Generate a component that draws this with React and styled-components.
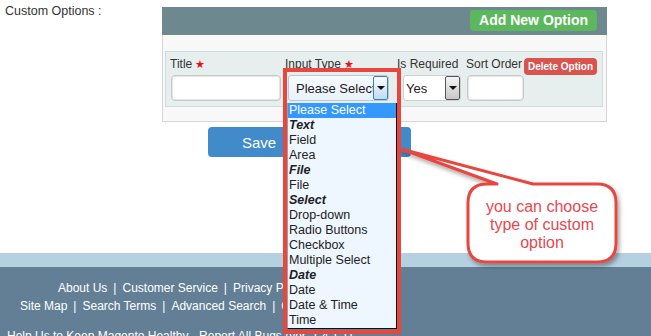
import React from "react";
import styled, { createGlobalStyle } from "styled-components";

const GlobalStyle = createGlobalStyle`
  html, body {
    margin: 0;
    padding: 0;
    background: #ffffff;
  }
  body {
    font-family: "Liberation Sans", Arial, sans-serif;
    color: #333333;
  }
`;

const Page = styled.div`
  position: relative;
  width: 651px;
  height: 336px;
  overflow: hidden;
`;

const Main = styled.div`
  height: 253px;
  padding-top: 7px;
  box-sizing: border-box;
`;

const TopRow = styled.div`
  display: flex;
  align-items: flex-start;
`;

const SideLabel = styled.div`
  width: 162px;
  padding-left: 5px;
  margin-top: -3px;
  box-sizing: border-box;
  font-size: 12.5px;
  line-height: 15px;
  color: #333;
`;

const Panel = styled.div`
  width: 445px;
  display: flex;
  flex-direction: column;
`;

const PanelHeader = styled.div`
  height: 28px;
  box-sizing: border-box;
  background: #6e8890;
  display: flex;
  align-items: flex-start;
  justify-content: flex-end;
  padding: 3px 10px 0 0;
`;

const AddButton = styled.button`
  height: 21px;
  padding: 0 9px;
  border: none;
  border-radius: 4px;
  background: #5cb85c;
  color: #ffffff;
  font-family: "Liberation Sans", Arial, sans-serif;
  font-size: 14px;
  font-weight: 700;
  line-height: 21px;
`;

const PanelBody = styled.div`
  background: #f8f8f8;
  border: 1px solid #d6d6d6;
  border-top: none;
  padding: 16px 3px 14px 2px;
`;

const OptionBox = styled.div`
  display: flex;
  align-items: flex-start;
  background: #e7eeee;
  border: 1px solid #cfdbdb;
  padding: 5px 0 5px 4px;
`;

const Column = styled.div`
  width: ${(p) => p.$w}px;
  display: flex;
  flex-direction: column;
  gap: 3px;
`;

const Label = styled.div`
  font-size: 12px;
  line-height: 15px;
  color: #333;
  white-space: nowrap;
`;

const Star = styled.span`
  color: #ee1111;
  font-size: 11px;
  margin-left: 3px;
`;

const TextInput = styled.div`
  width: ${(p) => p.$w}px;
  height: 26px;
  margin-left: 1px;
  box-sizing: border-box;
  background: #ffffff;
  border: 1px solid #c9c9c9;
  border-radius: 4px;
  box-shadow: inset 0 0 0 1px #e6e6e6;
`;

const SelectBox = styled.div`
  width: ${(p) => p.$w}px;
  height: 26px;
  margin-left: ${(p) => p.$ml}px;
  box-sizing: border-box;
  display: flex;
  align-items: center;
  background: ${(p) => (p.$blue ? "linear-gradient(#f6faff, #e9f1fa)" : "#ffffff")};
  border: 1px solid ${(p) => (p.$blue ? "#b9c9d6" : "#d0d0d0")};
  border-radius: 3px;
  font-size: 13px;
  color: #222;
  overflow: hidden;
`;

const SelectText = styled.span`
  flex: 1;
  padding-left: ${(p) => p.$pl}px;
  white-space: nowrap;
  overflow: hidden;
`;

const ArrowButton = styled.span`
  width: 15px;
  height: 24px;
  box-sizing: border-box;
  display: flex;
  align-items: center;
  justify-content: center;
  border: 1px solid ${(p) => (p.$blue ? "#3b7fb5" : "#555")};
  border-radius: 2px;
  background: ${(p) =>
    p.$blue ? "linear-gradient(#fdfeff, #bcdcf5)" : "linear-gradient(#f4f4f4, #c8c8c8)"};
  &::after {
    content: "";
    border-left: 4px solid transparent;
    border-right: 4px solid transparent;
    border-top: 4px solid #111;
  }
`;

const DeleteButton = styled.button`
  height: 17px;
  margin-top: 1px;
  padding: 0 4px;
  border: none;
  border-radius: 4px;
  background: #d9534f;
  color: #ffffff;
  font-family: "Liberation Sans", Arial, sans-serif;
  font-size: 10px;
  font-weight: 700;
  line-height: 17px;
  white-space: nowrap;
`;

const SaveButton = styled.button`
  display: block;
  width: 203px;
  height: 30px;
  margin: 5px 0 0 208px;
  padding: 0 0 0 34px;
  text-align: left;
  border: none;
  border-radius: 4px;
  background: #428bca;
  color: #ffffff;
  font-family: "Liberation Sans", Arial, sans-serif;
  font-size: 15px;
`;

const Footer = styled.div`
  border-top: 14px solid #b5d0e1;
  background: #627f95;
  height: 83px;
  padding-top: 12px;
  box-sizing: border-box;
`;

const FooterLine = styled.div`
  padding-left: ${(p) => p.$indent}px;
  margin-top: ${(p) => p.$mt || 0}px;
  font-size: 12px;
  line-height: 18px;
  color: #ffffff;
  white-space: nowrap;
`;

const Sep = styled.span`
  margin: 0 6px;
`;

const Highlight = styled.div`
  position: absolute;
  left: 283px;
  top: 68px;
  width: 118px;
  height: 266px;
  box-sizing: border-box;
  border: 4px solid #e8473f;
`;

const DropList = styled.div`
  position: absolute;
  left: 287px;
  top: 103px;
  width: 110px;
  box-sizing: border-box;
  background: #eef6ff;
  border-left: 1px solid #a0a0a0;
  border-right: 1px solid #111;
  border-bottom: 1px solid #111;
`;

const DropItem = styled.div`
  height: 15px;
  line-height: 15px;
  padding-left: 1px;
  font-size: 12.5px;
  color: ${(p) => (p.$active ? "#ffffff" : "#222")};
  background: ${(p) => (p.$active ? "#3399ff" : "transparent")};
  font-weight: ${(p) => (p.$group ? 700 : 400)};
  font-style: ${(p) => (p.$group ? "italic" : "normal")};
  white-space: nowrap;
`;

const CalloutShape = styled.svg`
  position: absolute;
  left: 0;
  top: 0;
  overflow: visible;
`;

const CalloutText = styled.div`
  position: absolute;
  left: 468px;
  top: 198px;
  width: 148px;
  text-align: center;
  font-size: 16px;
  line-height: 18px;
  color: #e8474f;
`;

const items = [
  { t: "Please Select", active: true },
  { t: "Text", group: true },
  { t: "Field" },
  { t: "Area" },
  { t: "File", group: true },
  { t: "File" },
  { t: "Select", group: true },
  { t: "Drop-down" },
  { t: "Radio Buttons" },
  { t: "Checkbox" },
  { t: "Multiple Select" },
  { t: "Date", group: true },
  { t: "Date" },
  { t: "Date & Time" },
  { t: "Time" },
];

export default function App() {
  return (
    <Page>
      <GlobalStyle />
      <Main>
        <TopRow>
          <SideLabel>Custom Options :</SideLabel>
          <Panel>
            <PanelHeader>
              <AddButton>Add New Option</AddButton>
            </PanelHeader>
            <PanelBody>
              <OptionBox>
                <Column $w={115}>
                  <Label>
                    Title<Star>★</Star>
                  </Label>
                  <TextInput $w={110} />
                </Column>
                <Column $w={112}>
                  <Label>
                    Input Type<Star>★</Star>
                  </Label>
                  <SelectBox $w={101} $ml={3} $blue>
                    <SelectText $pl={7}>Please Select</SelectText>
                    <ArrowButton $blue />
                  </SelectBox>
                </Column>
                <Column $w={69}>
                  <Label>Is Required</Label>
                  <SelectBox $w={58} $ml={6}>
                    <SelectText $pl={2}>Yes</SelectText>
                    <ArrowButton />
                  </SelectBox>
                </Column>
                <Column $w={58}>
                  <Label>Sort Order</Label>
                  <TextInput $w={57} />
                </Column>
                <DeleteButton>Delete Option</DeleteButton>
              </OptionBox>
            </PanelBody>
          </Panel>
        </TopRow>
        <SaveButton>Save</SaveButton>
      </Main>
      <Footer>
        <FooterLine $indent={58}>
          About Us<Sep>|</Sep>Customer Service<Sep>|</Sep>Privacy Policy
        </FooterLine>
        <FooterLine $indent={20}>
          Site Map<Sep>|</Sep>Search Terms<Sep>|</Sep>Advanced Search<Sep>|</Sep>Contact Us
        </FooterLine>
        <FooterLine $indent={7} $mt={12}>
          Help Us to Keep Magento Healthy - Report All Bugs (ver. 1.4.1.1)
        </FooterLine>
      </Footer>

      <Highlight />
      <DropList>
        {items.map((it, i) => (
          <DropItem key={i} $active={it.active} $group={it.group}>
            {it.t}
          </DropItem>
        ))}
      </DropList>

      <CalloutShape width="651" height="336" viewBox="0 0 651 336">
        <defs>
          <filter id="cs" x="-20%" y="-20%" width="140%" height="140%">
            <feDropShadow dx="2" dy="3" stdDeviation="2" floodColor="#000" floodOpacity="0.35" />
          </filter>
        </defs>
        <path
          d="M 487 184 L 497 184 L 401 149 L 533 184 L 597 184 Q 616 184 616 203 L 616 243 Q 616 262 597 262 L 487 262 Q 468 262 468 243 L 468 203 Q 468 184 487 184 Z"
          fill="#ffffff"
          stroke="#e8463f"
          strokeWidth="3"
          strokeLinejoin="round"
          filter="url(#cs)"
        />
      </CalloutShape>
      <CalloutText>
        you can choose
        <br />
        type of custom
        <br />
        option
      </CalloutText>
    </Page>
  );
}
